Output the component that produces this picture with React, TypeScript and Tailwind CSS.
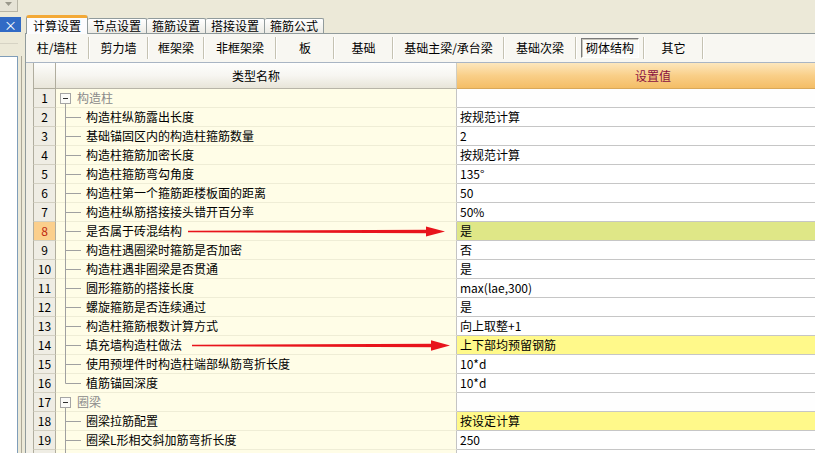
import React from "react";

type Row = {
  n: number;
  name: string;
  value?: string;
  group?: boolean;
  last?: boolean;
  hl?: "green" | "yellow";
  sel?: boolean;
  hideNum?: boolean;
};

const rows: Row[] = [
  { n: 1, name: "构造柱", group: true },
  { n: 2, name: "构造柱纵筋露出长度", value: "按规范计算" },
  { n: 3, name: "基础锚固区内的构造柱箍筋数量", value: "2" },
  { n: 4, name: "构造柱箍筋加密长度", value: "按规范计算" },
  { n: 5, name: "构造柱箍筋弯勾角度", value: "135°" },
  { n: 6, name: "构造柱第一个箍筋距楼板面的距离", value: "50" },
  { n: 7, name: "构造柱纵筋搭接接头错开百分率", value: "50%" },
  { n: 8, name: "是否属于砖混结构", value: "是", hl: "green", sel: true },
  { n: 9, name: "构造柱遇圈梁时箍筋是否加密", value: "否" },
  { n: 10, name: "构造柱遇非圈梁是否贯通", value: "是" },
  { n: 11, name: "圆形箍筋的搭接长度", value: "max(lae,300)" },
  { n: 12, name: "螺旋箍筋是否连续通过", value: "是" },
  { n: 13, name: "构造柱箍筋根数计算方式", value: "向上取整+1" },
  { n: 14, name: "填充墙构造柱做法", value: "上下部均预留钢筋", hl: "yellow" },
  { n: 15, name: "使用预埋件时构造柱端部纵筋弯折长度", value: "10*d" },
  { n: 16, name: "植筋锚固深度", value: "10*d", last: true },
  { n: 17, name: "圈梁", group: true },
  { n: 18, name: "圈梁拉筋配置", value: "按设定计算", hl: "yellow" },
  { n: 19, name: "圈梁L形相交斜加筋弯折长度", value: "250" },
  { n: 20, name: "", value: "", hideNum: true },
];

const tabs = ["计算设置", "节点设置", "箍筋设置", "搭接设置", "箍筋公式"];

const buttons: { label: string; w: string; pressed?: boolean }[] = [
  { label: "柱/墙柱", w: "w-[62px]" },
  { label: "剪力墙", w: "w-[57px]" },
  { label: "框架梁", w: "w-[54px]" },
  { label: "非框架梁", w: "w-[70px]" },
  { label: "板", w: "w-[56px]" },
  { label: "基础", w: "w-[57px]" },
  { label: "基础主梁/承台梁", w: "w-[109px]" },
  { label: "基础次梁", w: "w-[70px]" },
  { label: "砌体结构", w: "w-[66px]", pressed: true },
  { label: "其它", w: "w-[57px]" },
];

function TreeChild({ last }: { last?: boolean }) {
  return (
    <svg width="30" height="19" className="shrink-0 self-start">
      <line x1="9.5" y1="0" x2="9.5" y2={last ? 9.5 : 19} stroke="#a0a0a0" strokeWidth="1" />
      <line x1="9.5" y1="9.5" x2="25" y2="9.5" stroke="#a0a0a0" strokeWidth="1" />
    </svg>
  );
}

function TreeGroup() {
  return (
    <svg width="21" height="19" className="shrink-0 self-start">
      <rect x="4.5" y="4.5" width="10" height="10" fill="#fbfbf8" stroke="#a5a5a5" strokeWidth="1" />
      <line x1="7" y1="9.5" x2="12" y2="9.5" stroke="#303030" strokeWidth="1" />
      <line x1="9.5" y1="15" x2="9.5" y2="19" stroke="#a0a0a0" strokeWidth="1" />
    </svg>
  );
}

export default function App() {
  return (
    <div className="w-[815px] h-[453px] overflow-hidden bg-[#ece9d8] flex text-[12px] leading-none text-black font-['Noto_Sans_CJK_SC','Noto_Sans',sans-serif]">
      {/* left pane */}
      <div className="w-[25px] shrink-0 flex flex-col">
        <div className="h-[12px] w-[18px] border-r border-b border-[#b8b5a6] bg-[#e6e3d6] flex justify-center pt-[2px]">
          <svg width="7" height="4">
            <polygon points="0,0 7,0 3.5,4" fill="#9a988c" />
          </svg>
        </div>
        <div className="h-[5px]" />
        <div className="h-[15px] w-[21px] bg-[#316ac5] text-white flex items-center justify-end pr-[4px] text-[13px]">
          ×
        </div>
        <div className="h-[11px]" />
        <div className="h-px w-[18px] bg-[#d6d3c4]" />
        <div className="h-[12px]" />
        <div className="flex-1 flex">
          <div className="w-[18px] bg-white border-t border-r border-[#7f9db9]" />
          <div className="w-[3px]" />
          <div className="w-px bg-[#aca899]" />
        </div>
      </div>

      {/* main */}
      <div className="flex-1 min-w-0 flex flex-col">
        <div className="h-[15px] shrink-0" />
        {/* tabs */}
        <div className="h-[18px] shrink-0 flex items-end pl-px relative z-10">
          {tabs.map((t, i) =>
            i === 0 ? (
              <div
                key={t}
                className="w-[62px] h-[19px] -mb-px bg-[#fcfcfe] border-x border-[#919b9c] border-t-[3px] border-t-[#f3a937] rounded-t-[3px] flex items-center justify-center pb-[1px]"
              >
                {t}
              </div>
            ) : (
              <div
                key={t}
                className="w-[59px] h-[15px] bg-gradient-to-b from-white to-[#ecebe5] border-t border-r border-[#919b9c] rounded-t-[2px] flex items-center justify-center"
              >
                {t}
              </div>
            )
          )}
        </div>
        {/* tab page */}
        <div className="flex-1 min-h-0 flex flex-col bg-[#fafaf7] border-t border-l border-[#919b9c]">
          {/* button row */}
          <div className="h-[29px] shrink-0 flex items-center border-b border-[#a9b5c4] bg-[#f8f7f2]">
            {buttons.map((b) => (
              <React.Fragment key={b.label}>
                <div className={`${b.w} h-full shrink-0 flex items-center justify-center`}>
                  {b.pressed ? (
                    <div className="w-[58px] h-[20px] border border-t-[#7a7a7a] border-l-[#7a7a7a] border-r-white border-b-white bg-[#fbfbf9] shadow-[inset_1px_1px_0_#c8c6bc] flex items-center justify-center">
                      {b.label}
                    </div>
                  ) : (
                    b.label
                  )}
                </div>
                <div className="w-[2px] h-[22px] shrink-0 border-l border-l-[#c5c2b2] border-r border-r-white" />
              </React.Fragment>
            ))}
          </div>

          {/* table */}
          <div className="flex-1 min-h-0 pl-[7px] bg-[#f1efe6] overflow-hidden">
            <div className="flex flex-col w-[816px]">
              {/* header */}
              <div className="h-[26px] flex shrink-0">
                <div className="w-[23px] shrink-0 border-l border-r border-b border-[#b0ad9e] bg-gradient-to-b from-[#fdfdfb] to-[#e9e6da]" />
                <div className="w-[401px] shrink-0 border-r border-b border-r-[#cfcdc2] border-b-[#b8b5a8] bg-gradient-to-b from-[#fefefd] via-[#f7f6f1] to-[#e8e5d9] flex items-center justify-center">
                  类型名称
                </div>
                <div className="w-[392px] shrink-0 border-b border-[#d9a85a] bg-gradient-to-b from-[#fde7bd] via-[#f9cf88] to-[#f4bd66] flex items-center justify-center text-[#8a1040]">
                  设置值
                </div>
              </div>
              {/* body */}
              <div className="relative">
                {rows.map((r) => (
                  <div key={r.n} className="h-[19px] flex shrink-0">
                    <div
                      className={`w-[23px] shrink-0 border-l border-r border-b border-l-[#b0ad9e] border-r-[#b0ad9e] border-b-[#d3d0c2] flex items-center justify-center ${
                        r.sel ? "bg-[#fbcf8c] text-[#c02810]" : "bg-[#efede4]"
                      }`}
                    >
                      {r.hideNum ? "" : r.n}
                    </div>
                    <div className="w-[401px] shrink-0 flex items-center bg-[#fffde7] border-r border-r-[#c4c4c4] border-b border-b-[#efedd6]">
                      {r.group ? <TreeGroup /> : <TreeChild last={r.last} />}
                      <span className={r.group ? "text-[#8a8a8a]" : ""}>{r.name}</span>
                    </div>
                    <div
                      className={`w-[392px] shrink-0 border-b border-[#c6c6c6] pl-[3px] flex items-center ${
                        r.hl === "green"
                          ? "bg-[#dfe787]"
                          : r.hl === "yellow"
                          ? "bg-[#fff98a]"
                          : r.group
                          ? "bg-[#fefefe]"
                          : "bg-white"
                      }`}
                    >
                      {r.value}
                    </div>
                  </div>
                ))}
                {/* annotation arrows */}
                <svg
                  className="absolute left-0 top-0 pointer-events-none"
                  width="816"
                  height="380"
                >
                  <polygon
                    points="155,141.8 396,140.8 396,144.2 155,143.2"
                    fill="#e8141c"
                  />
                  <polygon points="393,137.5 412,142.5 393,147.5" fill="#e8141c" />
                  <polygon
                    points="159,255.8 401,254.8 401,258.2 159,257.2"
                    fill="#e8141c"
                  />
                  <polygon points="398,251.2 417,256.5 398,261.8" fill="#e8141c" />
                </svg>
              </div>
            </div>
          </div>
        </div>
      </div>
    </div>
  );
}
